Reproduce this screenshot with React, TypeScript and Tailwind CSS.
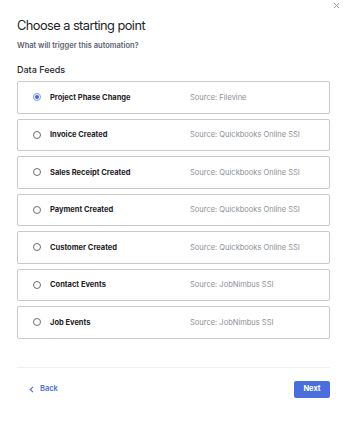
import React from "react";

const items = [
  { label: "Project Phase Change", source: "Source: Filevine", selected: true },
  { label: "Invoice Created", source: "Source: Quickbooks Online SSI" },
  { label: "Sales Receipt Created", source: "Source: Quickbooks Online SSI" },
  { label: "Payment Created", source: "Source: Quickbooks Online SSI" },
  { label: "Customer Created", source: "Source: Quickbooks Online SSI" },
  { label: "Contact Events", source: "Source: JobNimbus SSI" },
  { label: "Job Events", source: "Source: JobNimbus SSI" },
];

export default function App() {
  return (
    <div
      className="w-[344px] h-[422px] bg-white relative"
      style={{ fontFamily: "Inter, 'Noto Sans', sans-serif" }}
    >
      <button className="absolute right-[4px] top-[2px]">
        <svg width="7" height="7" viewBox="0 0 7 7">
          <path d="M1 1 L6 6 M6 1 L1 6" stroke="#8a8f98" strokeWidth="0.9" />
        </svg>
      </button>
      <div className="pl-[17px] pr-[14px] pt-[18px]">
        <h1 className="text-[12.8px] leading-[16px] tracking-[-0.55px] text-[#1c1f24] font-normal">
          Choose a starting point
        </h1>
        <p className="mt-[7px] text-[7.5px] leading-[10px] font-semibold text-[#5b6270]">
          What will trigger this automation?
        </p>
        <h2 className="mt-[13px] text-[9px] leading-[12px] font-medium text-[#23262b]">Data Feeds</h2>
        <div className="mt-[5px] flex flex-col gap-[5px]">
          {items.map((it) => (
            <div
              key={it.label}
              className="h-[32.5px] border border-[#c9c9c9] rounded-[2px] flex items-center"
            >
              <div className="w-[32px] flex justify-center pl-[5px]">
                {it.selected ? (
                  <div className="w-[8px] h-[8px] rounded-full border border-[#7a96ee] bg-white flex items-center justify-center">
                    <div className="w-[4px] h-[4px] rounded-full bg-[#3f66e0]" />
                  </div>
                ) : (
                  <div className="w-[8px] h-[8px] rounded-full border border-[#6b6e74] bg-white" />
                )}
              </div>
              <div className="w-[140px] text-[7.5px] font-bold text-[#1e2126]">{it.label}</div>
              <div className="text-[7.5px] text-[#8c8f94]">{it.source}</div>
            </div>
          ))}
        </div>
        <div className="mt-[28px] h-px bg-[#eef0f3]" />
        <div className="mt-[13px] flex items-center justify-between">
          <button className="flex items-center gap-[6px] pl-[12px] text-[#4a6fdc] text-[7.5px] font-semibold">
            <svg width="5" height="7" viewBox="0 0 5 7">
              <path d="M4 0.8 L1.2 3.5 L4 6.2" stroke="#4a6fdc" strokeWidth="1.1" fill="none" />
            </svg>
            Back
          </button>
          <button className="w-[36px] h-[17px] rounded-[2px] bg-[#4a6fdc] text-white text-[7.5px] font-bold">
            Next
          </button>
        </div>
      </div>
    </div>
  );
}
